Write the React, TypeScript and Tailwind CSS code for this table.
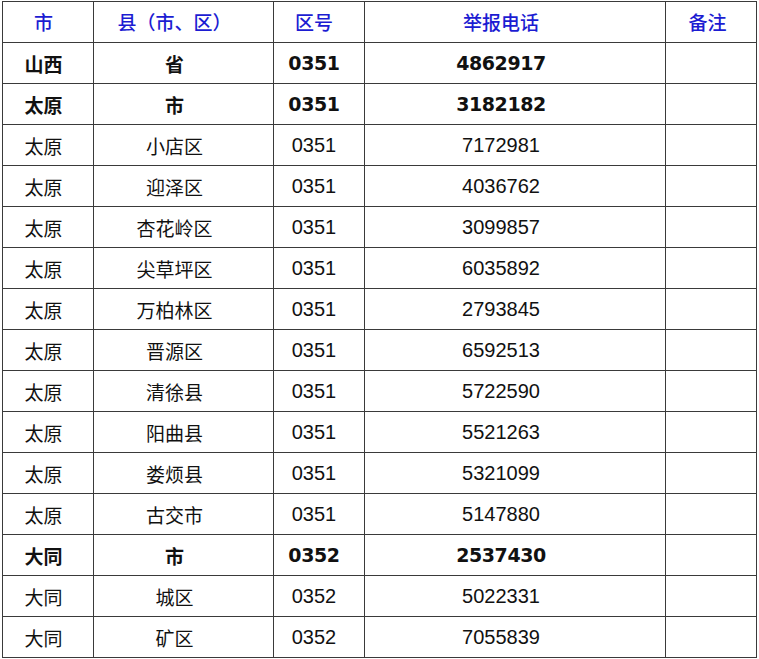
const headers = ['市', '县（市、区）', '区号', '举报电话', '备注']

interface Row {
  city: string
  county: string
  code: string
  phone: string
  bold?: boolean
}

const rows: Row[] = [
  { city: '山西', county: '省', code: '0351', phone: '4862917', bold: true },
  { city: '太原', county: '市', code: '0351', phone: '3182182', bold: true },
  { city: '太原', county: '小店区', code: '0351', phone: '7172981' },
  { city: '太原', county: '迎泽区', code: '0351', phone: '4036762' },
  { city: '太原', county: '杏花岭区', code: '0351', phone: '3099857' },
  { city: '太原', county: '尖草坪区', code: '0351', phone: '6035892' },
  { city: '太原', county: '万柏林区', code: '0351', phone: '2793845' },
  { city: '太原', county: '晋源区', code: '0351', phone: '6592513' },
  { city: '太原', county: '清徐县', code: '0351', phone: '5722590' },
  { city: '太原', county: '阳曲县', code: '0351', phone: '5521263' },
  { city: '太原', county: '娄烦县', code: '0351', phone: '5321099' },
  { city: '太原', county: '古交市', code: '0351', phone: '5147880' },
  { city: '大同', county: '市', code: '0352', phone: '2537430', bold: true },
  { city: '大同', county: '城区', code: '0352', phone: '5022331' },
  { city: '大同', county: '矿区', code: '0352', phone: '7055839' },
]

// per-column right padding, the source table sits its text a bit left of centre
const pads = ['pr-[9px]', 'pr-[18px]', 'pr-[10px]', 'pr-[28px]', 'pr-[7px]']

const cjk = 'font-["Noto_Sans_CJK_SC",sans-serif]'
const num = 'font-["Liberation_Sans","Noto_Sans_CJK_SC",sans-serif]'
const numBold = 'font-["DejaVu_Sans","Noto_Sans_CJK_SC",sans-serif]'

export default function App() {
  return (
    <div className="min-h-screen bg-white pt-px pl-[2px]">
      <div className="grid w-fit grid-cols-[90px_179px_90px_300px_90px] auto-rows-[40px] gap-px bg-[#3a3a3a] p-px">
        {headers.map((h, i) => (
          <div
            key={h}
            className={`flex items-center justify-center bg-white text-[19px] font-medium text-[#1c1cd2] ${cjk} ${pads[i]}`}
          >
            {h}
          </div>
        ))}
        {rows.map((r, idx) => {
          const cells = [r.city, r.county, r.code, r.phone, '']
          return cells.map((c, i) => {
            const isNum = i === 2 || i === 3
            const font = isNum
              ? (r.bold ? `${numBold} text-[19px] font-bold tracking-[-0.4px]` : `${num} text-[20px]`)
              : `${cjk} text-[19px] ${r.bold ? 'font-bold' : 'font-normal'}`
            return (
              <div
                key={`${idx}-${i}`}
                className={`flex items-center justify-center bg-white leading-none text-[#111] ${font} ${pads[i]}`}
              >
                {c}
              </div>
            )
          })
        })}
      </div>
    </div>
  )
}
